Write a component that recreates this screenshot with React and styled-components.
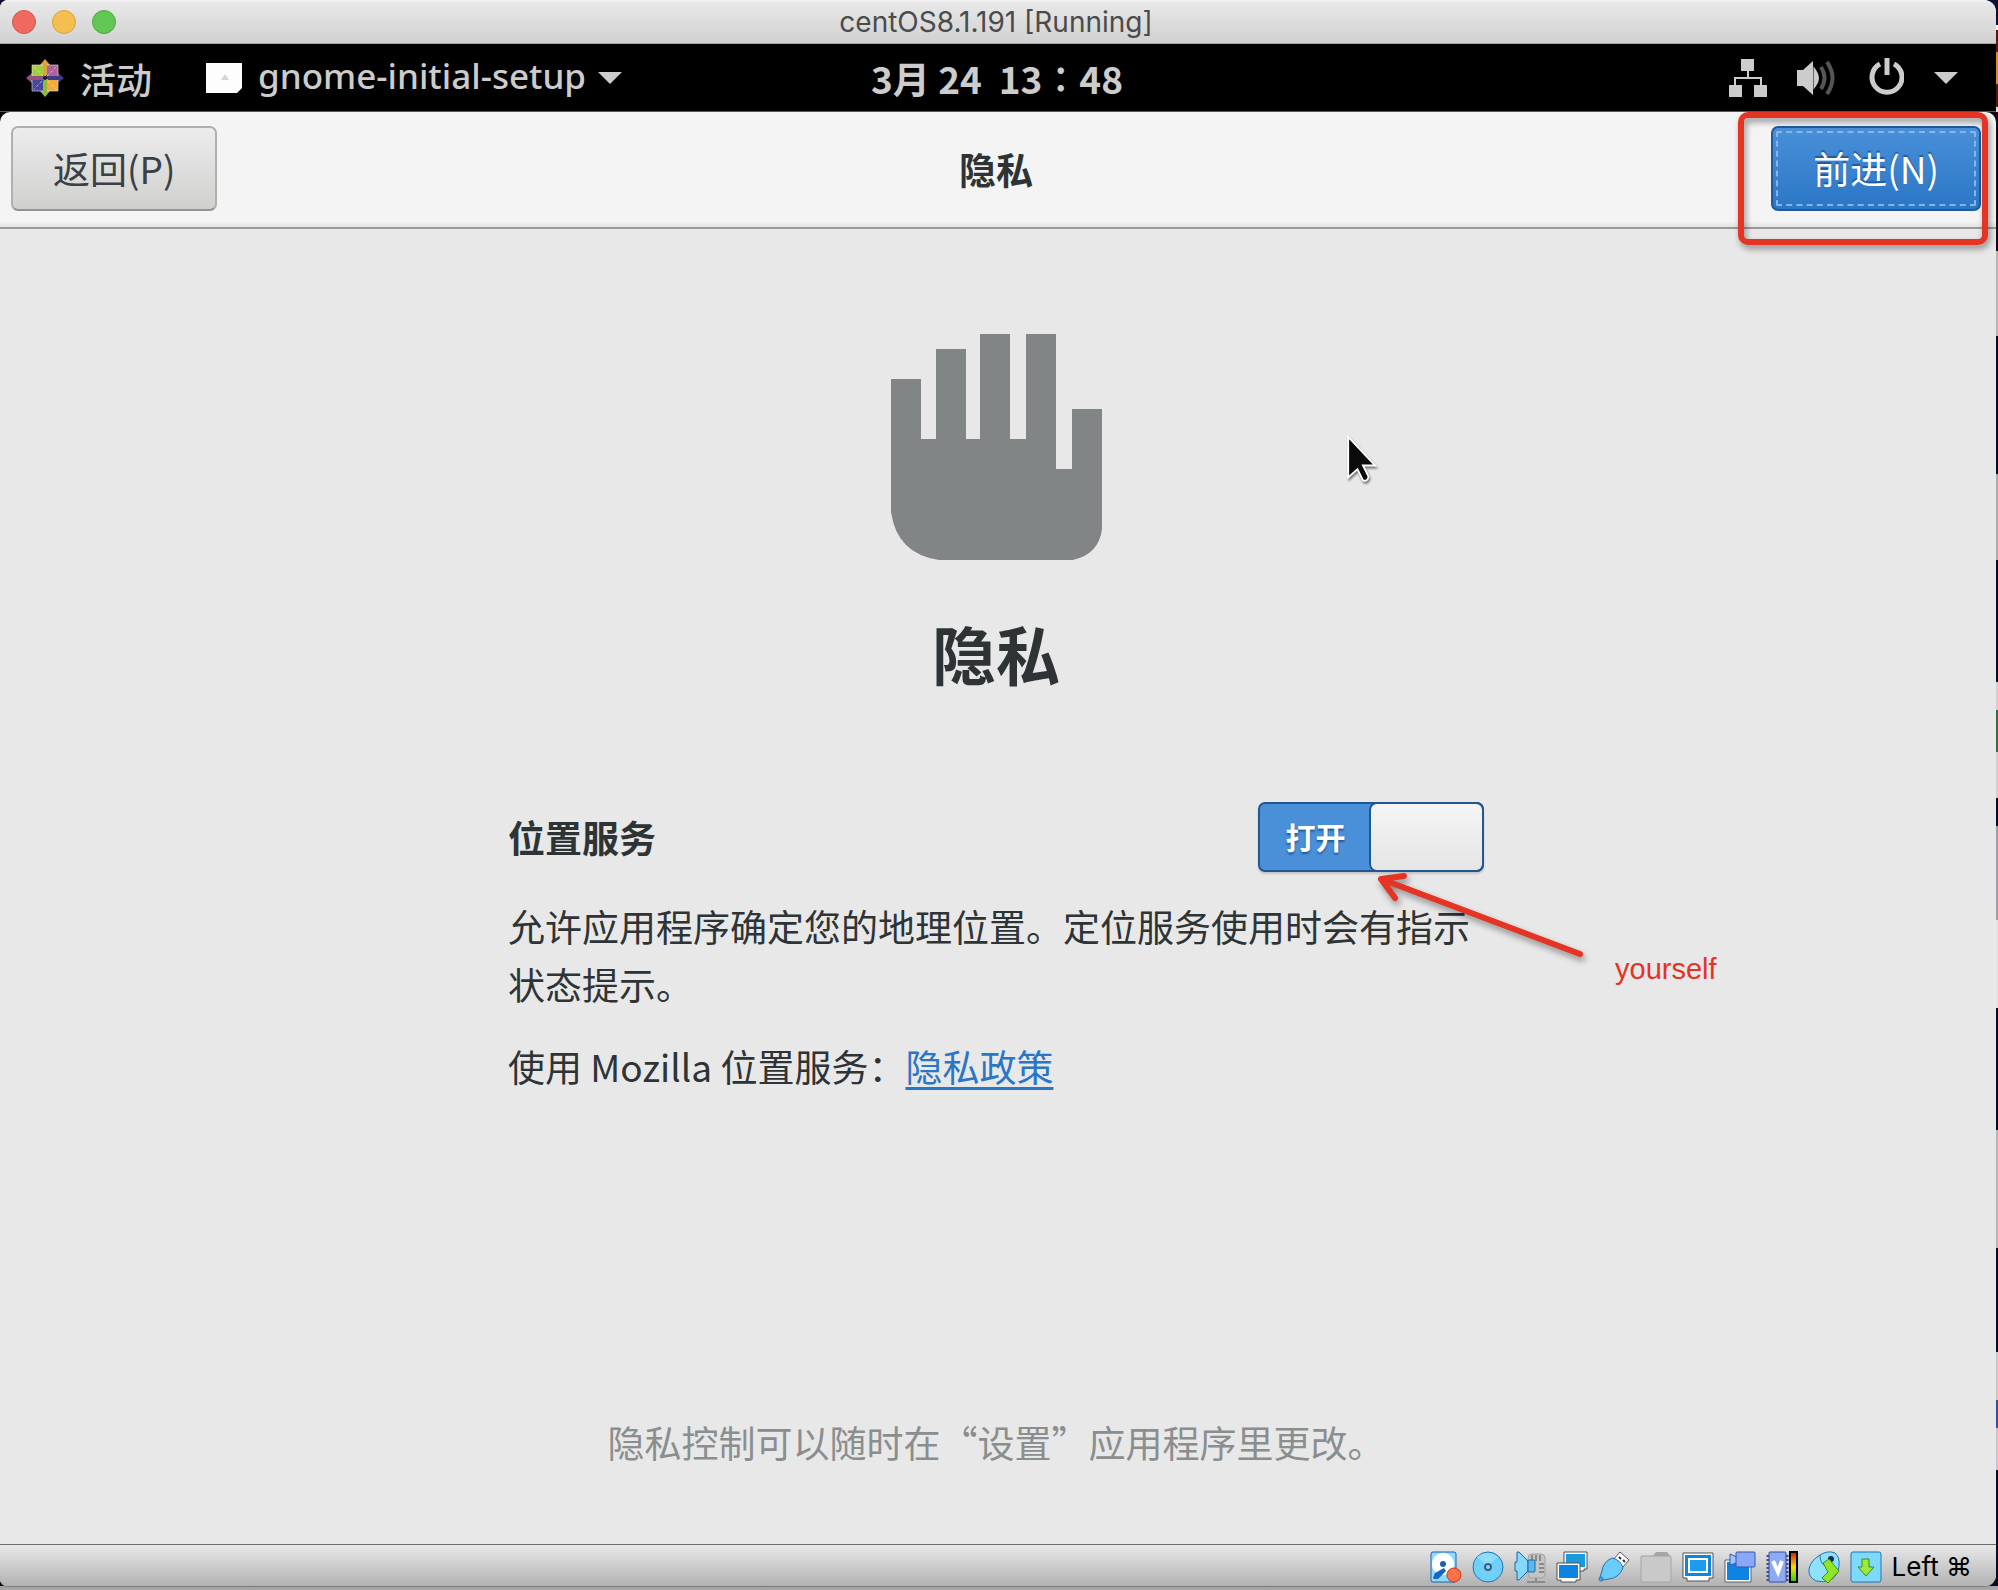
import { useState } from 'react';
import styled, { createGlobalStyle } from 'styled-components';

const cjk = "'Noto Sans CJK SC', 'Noto Sans', sans-serif";
const mac = "Inter, 'Liberation Sans', sans-serif";
const red = '#e53424';

const GlobalStyle = createGlobalStyle`
    * {
        box-sizing: border-box;
    }
    body {
        margin: 0;
        font-family: ${cjk};
        color: #2e3436;
    }
    h1, h2, p {
        margin: 0;
    }
`;

// what is left of the desktop on the right and below the window
const Desktop = styled.div`
    min-height: 100vh;
    display: flex;
    padding: 0 2px 3px 0;
    background:
        linear-gradient(#a2a2a2, #a8a8a8) left bottom / 100% 4px no-repeat,
        linear-gradient(
            #0b1030 25px, #f2f2f2 25px 30px, #5a1608 30px 52px, #d98a28 52px 84px,
            #4a1a06 84px 107px, #dddddd 107px 112px, #070b24 112px 251px,
            #b4b6ba 251px 336px, #070b24 336px 474px, #a9abaf 474px 560px,
            #070b24 560px 682px, #d0d0d0 682px 710px, #2c6e48 710px 752px,
            #d0d0d0 752px 798px, #070b24 798px 826px, #9c9ea6 826px 920px,
            #e4e4e4 920px 1008px, #070b24 1008px 1130px, #b4b6ba 1130px 1248px,
            #070b24 1248px 1352px, #c4c6ca 1352px 1400px, #34509a 1400px 1428px,
            #c4c6ca 1428px 1470px, #070b24 1470px
        );
`;

const Window = styled.div`
    flex: 1;
    display: flex;
    flex-direction: column;
    border-bottom: 1px solid #7b7b7b;
    border-radius: 8px 12px 12px 8px;
    overflow: hidden;
    background: #e8e8e8;
`;

const TitleBar = styled.header`
    display: grid;
    grid-template-columns: 1fr auto 1fr;
    align-items: center;
    height: 44px;
    padding: 0 16px 0 12px;
    background: linear-gradient(#f4f4f4, #e8e8e8 3px, #d1d1d1);
    border-bottom: 1px solid #a9a9a9;
`;

const Lights = styled.div`
    display: flex;
    gap: 16px;
`;

const Light = styled.button`
    width: 24px;
    height: 24px;
    padding: 0;
    border: 1px solid ${(props) => props.$edge};
    border-radius: 50%;
    background: ${(props) => props.$fill};
`;

const WindowTitle = styled.span`
    font: 28px/32px ${mac};
    color: #4b4b4b;
`;

const TopBar = styled.nav`
    display: grid;
    grid-template-columns: 1fr auto 1fr;
    align-items: center;
    height: 68px;
    padding: 0 38px 0 26px;
    background: #000;
    color: #cccccc;
    border-bottom: 1px solid #555;
`;

const TopGroup = styled.div`
    display: flex;
    align-items: center;
    justify-content: ${(props) => (props.$end ? 'flex-end' : 'flex-start')};
    gap: ${(props) => (props.$end ? '30px' : '54px')};
`;

const TopButton = styled.button`
    display: flex;
    align-items: center;
    gap: 16px;
    padding: 0;
    border: 0;
    background: none;
    color: inherit;
    font: 500 36px/48px ${cjk};
    svg {
        flex: none;
    }
`;

const AppName = styled.span`
    font: 500 35px/48px 'Noto Sans', sans-serif;
    margin-right: -4px;
    padding-bottom: 4px;
`;

const Clock = styled.time`
    margin-left: 10px;
    font-size: 37px;
    line-height: 48px;
    font-weight: 700;
    white-space: pre;
`;

const Frame = styled.div`
    background: #000;
`;

const HeaderBar = styled.div`
    display: grid;
    grid-template-columns: 1fr auto 1fr;
    align-items: center;
    height: 117px;
    padding: 0 15px 2px 11px;
    background: linear-gradient(#f4f4f4 109px, #e6e6e6 114px);
    border-bottom: 2px solid #9a9a98;
    border-radius: 10px 10px 0 0;
`;

const HeaderTitle = styled.h1`
    font-size: 37px;
    line-height: 56px;
    font-weight: 700;
`;

const HeaderButton = styled.button`
    height: 85px;
    padding: 0 40px 2px;
    border: 2px solid #b0b0ac;
    border-bottom-color: #94948f;
    border-radius: 7px;
    background: linear-gradient(#ececec, #d0d0cf);
    color: #3a4043;
    font: 37px/56px ${cjk};
`;

const SuggestedButton = styled(HeaderButton)`
    border-color: #1f5a9c;
    background: linear-gradient(#4a90d9, #2a76c6);
    color: #fff;
    outline: 2px dashed #86b6e8;
    outline-offset: -7px;
    text-shadow: 0 -2px 1px #1f5a9c;
`;

const NextSlot = styled.div`
    position: relative;
    justify-self: end;
`;

const Highlight = styled.div`
    position: absolute;
    inset: -14px -7px -34px -33px;
    border: 6px solid ${red};
    border-radius: 10px;
    filter: drop-shadow(2px 4px 3px rgba(0, 0, 0, 0.4));
    pointer-events: none;
`;

const Page = styled.main`
    position: relative;
    flex: 1;
    display: flex;
    flex-direction: column;
    align-items: center;
    padding: 105px 4px 74px 0;
`;

const PageTitle = styled.h2`
    margin-top: 44px;
    font-size: 64px;
    line-height: 96px;
    font-weight: 700;
`;

const Settings = styled.section`
    position: relative;
    width: 976px;
    max-width: 100%;
    margin-top: 102px;
`;

const SettingRow = styled.div`
    display: flex;
    align-items: center;
    justify-content: space-between;
    margin-bottom: 25px;
`;

const SettingLabel = styled.label`
    font-size: 37px;
    line-height: 56px;
    font-weight: 700;
`;

const Switch = styled.div`
    position: relative;
    display: grid;
    grid-template-columns: 1fr 1fr;
    width: 226px;
    height: 70px;
    border: 2px solid #24568f;
    border-radius: 7px;
    background: ${(props) => (props.$on ? '#4a90d9' : '#c8c8c6')};
    box-shadow: 0 2px 2px rgba(0, 0, 0, 0.15);
`;

const SwitchInput = styled.input`
    position: absolute;
    inset: 0;
    width: 100%;
    height: 100%;
    margin: 0;
    opacity: 0;
`;

const SwitchText = styled.span`
    align-self: center;
    padding-bottom: 2px;
    text-align: center;
    color: #fff;
    font-size: 30px;
    line-height: 40px;
    font-weight: 700;
    text-shadow: 0 2px 2px #1f5a9c;
`;

const SwitchKnob = styled.span`
    order: ${(props) => (props.$on ? 1 : -1)};
    border-radius: 6px;
    box-shadow: 0 0 0 2px #24568f;
    background: linear-gradient(#f5f5f5, #e5e5e5);
`;

const Text = styled.p`
    font-size: 37px;
    line-height: 58px;
    margin-bottom: 24px;
`;

const PolicyLink = styled.a`
    color: #2a76c6;
    text-decoration-thickness: 3px;
    text-underline-offset: 5px;
`;

const Footnote = styled.p`
    margin-top: auto;
    font-size: 37px;
    line-height: 56px;
    color: #8b8e8f;
`;

const Arrow = styled.svg`
    position: absolute;
    left: 865px;
    top: 66px;
    filter: drop-shadow(2px 4px 3px rgba(0, 0, 0, 0.4));
`;

const Note = styled.span`
    position: absolute;
    left: 1107px;
    top: 147px;
    font: 29px/40px 'Liberation Sans', sans-serif;
    color: ${red};
`;

const Pointer = styled.svg`
    position: absolute;
    left: calc(50% + 348px);
    top: 205px;
    filter: drop-shadow(1px 2px 1px rgba(0, 0, 0, 0.5));
`;

const StatusBar = styled.footer`
    display: flex;
    align-items: center;
    justify-content: flex-end;
    gap: 10px;
    height: 42px;
    padding: 2px 24px 0;
    border-top: 1px solid #6c6c6c;
    background: linear-gradient(#e8e8e8, #b2b2b2);
`;

const HostKey = styled.span`
    font: 26px/32px Inter, 'DejaVu Sans', sans-serif;
    color: #000;
`;

const CentosLogo = () => (
    <svg width="38" height="38" viewBox="0 0 38 38">
        <path d="M19 0l5 6h-10zM16 4h6v14h-6z" fill="#dfa13c" />
        <path d="M38 19l-6 5v-10zM20 16h14v6H20z" fill="#3d3c82" />
        <path d="M19 38l-5-6h10zM16 20h6v14h-6z" fill="#8fbb3a" />
        <path d="M0 19l6-5v10zM4 16h14v6H4z" fill="#94527f" />
        <path d="M6 6h11v11H6z" fill="#a3cf3f" />
        <path d="M21 6h11v11H21z" fill="#b0609d" />
        <path d="M6 21h11v11H6z" fill="#48479a" />
        <path d="M21 21h11v11H21z" fill="#f0aa3e" />
        <g fill="none" stroke="#efe6ec" strokeOpacity=".6">
            <path d="M6 17V6h11M21 6h11v11M32 21v11H21M17 32H6V21" />
            <path d="M8 8l22 22M30 8L8 30" strokeDasharray="3 2" />
        </g>
        <circle cx="19" cy="19" r="2" fill="#14143a" />
    </svg>
);

const BlankFile = () => (
    <svg width="36" height="30" viewBox="0 0 36 30">
        <path d="M0 0h36v25l-5 5H0z" fill="#fdfdfd" />
        <path d="M19 11l4 6h-8z" fill="#d4d4d4" />
    </svg>
);

const Caret = () => (
    <svg width="24" height="12" viewBox="0 0 24 12">
        <path d="M0 0h24L12 12z" fill="#cccccc" />
    </svg>
);

const NetworkIcon = () => (
    <svg width="38" height="38" viewBox="0 0 38 38" fill="#cccccc">
        <path d="M12 0h13v12H12zM0 26h13v12H0zM25 26h13v12H25z" />
        <path d="M19 12v8M6 26v-7h26v7" fill="none" stroke="#cccccc" strokeWidth="2" />
    </svg>
);

const VolumeIcon = () => (
    <svg width="39" height="36" viewBox="0 0 39 36">
        <path d="M0 10h6L16 1v34L6 26H0z" fill="#cccccc" />
        <path d="M18 11q5 7 0 14z" fill="#cccccc" stroke="#cccccc" strokeWidth="3" />
        <path d="M24 7q7 11 0 22M30 2q11 16 0 32" fill="none" stroke="#555" strokeWidth="4" />
    </svg>
);

const PowerIcon = () => (
    <svg width="38" height="40" viewBox="-3 2 38 40" fill="none" stroke="#cccccc">
        <path d="M11 8a15 15 0 1 0 14 0" strokeWidth="5" />
        <path d="M18 2v17" strokeWidth="5" />
    </svg>
);

const HandIcon = () => (
    <svg width="211" height="226" viewBox="0 0 211 226">
        <path
            d="M0 45h30v60h15V15h30v90h14V0h30v105h16V0h30v135h16V75h30v120q-3 25-29 31H48Q6 220 0 178z"
            fill="#828586"
        />
    </svg>
);

const DiskIcon = () => (
    <>
        <rect x="1" y="1" width="25" height="30" rx="2" fill="#8edcfb" stroke="#1c62b0" />
        <circle cx="13" cy="13" r="11" fill="#fff" />
        <circle cx="13" cy="13" r="3" fill="#1c62b0" />
        <path d="M3 27l2-5 9-5 2 3-8 8H4z" fill="#1565c8" />
        <circle cx="24" cy="24" r="7" fill="#ff7148" stroke="#c23a18" />
    </>
);

const DiscIcon = () => (
    <>
        <circle cx="16" cy="16" r="15" fill="#6fd0fa" stroke="#2472b8" />
        <path d="M5 6q10-8 21 0L16 15z" fill="#a4e6fd" opacity=".6" />
        <circle cx="16" cy="16" r="3" fill="#a6cbe2" stroke="#35628c" strokeWidth="2" />
    </>
);

const AudioIcon = () => (
    <>
        <rect x="14" y="3" width="17" height="24" rx="4" fill="#c4c4c4" stroke="#a2a2a2" />
        <path d="M18 4v6M22 4v6M26 4v6M25 13h5M25 17h5M25 21h5M22 27v3M13 31h18" stroke="#8b8b8b" strokeWidth="2" />
        <path d="M3 1h2l9 9v10l-9 9H3v-9H1v-9h2z" fill="#86d8fb" stroke="#1d67a8" />
        <rect x="14" y="9" width="7" height="12" rx="1" fill="#5ab8ee" stroke="#1d67a8" />
    </>
);

const NetworkAdapterIcon = () => (
    <>
        <path d="M8 1h23v17h-3v2H8z" fill="#fff" stroke="#4a5258" />
        <path d="M10 3h19v13H10z" fill="#1c9bdc" />
        <path d="M1 12h23v17h-4v2H5v-2H1z" fill="#fff" stroke="#4a5258" />
        <path d="M3 14h19v13H3z" fill="#0d84e2" />
    </>
);

const UsbIcon = () => (
    <>
        <path d="M22 1l9 8-7 8-9-8z" fill="#fff" stroke="#555" />
        <path d="M21 6l2 2M25 9l2 2" stroke="#333" strokeWidth="2" />
        <path d="M14 7q9 2 11 10-4 10-14 11l-6 1-3-3 2-6q1-9 10-13z" fill="#6accf8" stroke="#2472b8" />
        <circle cx="3" cy="28" r="2" fill="#4aa8e2" stroke="#2472b8" />
    </>
);

const FolderIcon = () => (
    <>
        <path d="M13 5l3-4h11l3 4z" fill="#a6a6a6" />
        <rect x="1" y="5" width="30" height="26" rx="1" fill="#c9c9c9" stroke="#a4a4a4" />
    </>
);

const DisplayIcon = () => (
    <>
        <path d="M1 2h30v25h-4v3H5v-3H1z" fill="#fff" stroke="#4a5258" />
        <path d="M3 4h26v21H3z" fill="#1085dc" />
        <path d="M7 8h18v13H7z" fill="#1c9bf0" stroke="#fff" strokeWidth="2" />
    </>
);

const RecordingIcon = () => (
    <>
        <path d="M1 9h26v22H1z" fill="#fff" stroke="#56606a" />
        <path d="M3 11h22v18H3z" fill="#0d84e2" />
        <path d="M6 3l7 3v6l-7 2z" fill="#9cc4ff" stroke="#3a55a8" />
        <rect x="12" y="1" width="19" height="15" rx="1" fill="#8aa8f8" stroke="#3a55a8" />
    </>
);

const CpuIcon = () => (
    <>
        <path d="M2 4v26M21 4v26" stroke="#3c4f96" strokeWidth="3" strokeDasharray="2 2" />
        <rect x="3" y="1" width="17" height="30" rx="1" fill="#8cabf4" stroke="#3c4f96" />
        <path d="M7 10l5 11 4-11" fill="none" stroke="#fff" strokeWidth="4" />
        <rect x="24" y="1" width="7" height="30" fill="url(#load)" stroke="#000" strokeWidth="2" />
        <defs>
            <linearGradient id="load" x1="0" y1="0" x2="0" y2="1">
                <stop offset="0" stopColor="#d81800" />
                <stop offset=".5" stopColor="#f8e000" />
                <stop offset="1" stopColor="#20d010" />
            </linearGradient>
        </defs>
    </>
);

const MouseIcon = () => (
    <>
        <path d="M12 4q8-5 15-2 5 4 4 13-1 9-8 14-8 3-15 1-8-4-7-12 2-9 11-14z" fill="#8ee2fb" stroke="#2472b8" />
        <path d="M12 4q0 8 5 11" fill="none" stroke="#2472b8" />
        <circle cx="23" cy="8" r="3" fill="#0b2c66" />
        <path d="M15 12l6-4 10 12-11 12-6-5 6-6z" fill="#92e428" stroke="#3a9410" />
    </>
);

const DownIcon = () => (
    <>
        <rect x="1" y="1" width="30" height="30" rx="2" fill="#7cdafc" stroke="#2472b8" />
        <path d="M12 8h7v8h5l-8 9-8-9h4z" fill="#9bea3c" stroke="#3b8a1a" />
    </>
);

const devices = [
    DiskIcon, DiscIcon, AudioIcon, NetworkAdapterIcon, UsbIcon, FolderIcon,
    DisplayIcon, RecordingIcon, CpuIcon, MouseIcon, DownIcon,
];

export default function App() {
    const [location, setLocation] = useState(true);

    return (
        <Desktop>
            <GlobalStyle />
            <Window>
                <TitleBar>
                    <Lights>
                        <Light $fill="#ee6a5f" $edge="#d3544a" aria-label="Close" />
                        <Light $fill="#f5bf4f" $edge="#d8a13c" aria-label="Minimize" />
                        <Light $fill="#62c655" $edge="#4ea73f" aria-label="Zoom" />
                    </Lights>
                    <WindowTitle>centOS8.1.191 [Running]</WindowTitle>
                </TitleBar>
                <TopBar>
                    <TopGroup>
                        <TopButton>
                            <CentosLogo />
                            活动
                        </TopButton>
                        <TopButton>
                            <BlankFile />
                            <AppName>gnome-initial-setup</AppName>
                            <Caret />
                        </TopButton>
                    </TopGroup>
                    <Clock>3月 24  13∶48</Clock>
                    <TopGroup $end>
                        <NetworkIcon />
                        <VolumeIcon />
                        <PowerIcon />
                        <Caret />
                    </TopGroup>
                </TopBar>
                <Frame>
                    <HeaderBar>
                        <div>
                            <HeaderButton>返回(P)</HeaderButton>
                        </div>
                        <HeaderTitle>隐私</HeaderTitle>
                        <NextSlot>
                            <SuggestedButton>前进(N)</SuggestedButton>
                            <Highlight />
                        </NextSlot>
                    </HeaderBar>
                </Frame>
                <Page>
                    <HandIcon />
                    <PageTitle>隐私</PageTitle>
                    <Settings>
                        <SettingRow>
                            <SettingLabel htmlFor="location">位置服务</SettingLabel>
                            <Switch $on={location}>
                                <SwitchText>{location ? '打开' : '关闭'}</SwitchText>
                                <SwitchKnob $on={location} />
                                <SwitchInput
                                    id="location"
                                    type="checkbox"
                                    role="switch"
                                    checked={location}
                                    onChange={(e) => setLocation(e.target.checked)}
                                />
                            </Switch>
                        </SettingRow>
                        <Text>允许应用程序确定您的地理位置。定位服务使用时会有指示状态提示。</Text>
                        <Text>
                            使用 Mozilla 位置服务：<PolicyLink href="#privacy">隐私政策</PolicyLink>
                        </Text>
                        <Arrow width="220" height="100" viewBox="0 0 220 100">
                            <path
                                d="M207 86L8 11M31 8L8 11l14 19"
                                fill="none"
                                stroke={red}
                                strokeWidth="6"
                                strokeLinecap="round"
                                strokeLinejoin="round"
                            />
                        </Arrow>
                        <Note>yourself</Note>
                    </Settings>
                    <Footnote>隐私控制可以随时在“设置”应用程序里更改。</Footnote>
                    <Pointer width="34" height="50" viewBox="0 0 36 54">
                        <path
                            d="M2 3v44l10-9 6 12q5 2 6-4l-6-12h13z"
                            fill="#0a0a0a"
                            stroke="#fff"
                            strokeWidth="2"
                        />
                    </Pointer>
                </Page>
                <StatusBar>
                    {devices.map((Icon, i) => (
                        <svg key={i} width="32" height="32" viewBox="0 0 32 32">
                            <Icon />
                        </svg>
                    ))}
                    <HostKey>Left ⌘</HostKey>
                </StatusBar>
            </Window>
        </Desktop>
    );
}
